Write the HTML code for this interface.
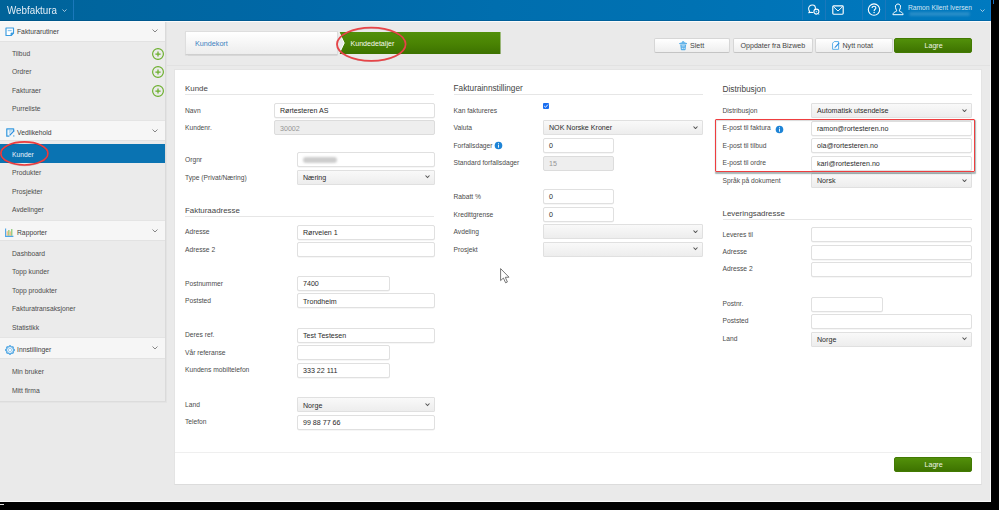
<!DOCTYPE html><html><head><meta charset="utf-8"><style>
html,body{margin:0;padding:0;width:999px;height:510px;overflow:hidden;background:#000;}
body{font-family:"Liberation Sans",sans-serif;position:relative;}
.ab{position:absolute;}
.t{position:absolute;white-space:pre;line-height:1;}
.inp{position:absolute;box-sizing:border-box;border:1px solid #e0e0e0;background:#fff;border-radius:2px;box-shadow:0 0.5px 0 #eee;}
.ro{position:absolute;box-sizing:border-box;border:1px solid #dcdcdc;background:#eeeeee;border-radius:2px;}
.sel{position:absolute;box-sizing:border-box;border:1px solid #e0e0e0;background:linear-gradient(#f9f9f9,#ededed);border-radius:1px;}
.btn{position:absolute;box-sizing:border-box;border:1px solid #d6d6d6;border-bottom-color:#c4c4c4;background:linear-gradient(#ffffff,#eeeeee);border-radius:2px;}
</style></head><body>
<div class="ab" style="left:0;top:0;width:991px;height:502px;background:#eaeaea;"></div>
<div class="ab" style="left:0;top:501px;width:991px;height:1px;background:#f8f8f8;"></div>
<div class="ab" style="left:990px;top:21px;width:1px;height:481px;background:#f8f8f8;"></div>
<div class="ab" style="left:0;top:504px;width:4px;height:1px;background:#e0e0e0;"></div>
<div class="ab" style="left:993px;top:0;width:1px;height:4px;background:#1a6fc0;"></div>

<div class="ab" style="left:0;top:0;width:991px;height:21px;background:linear-gradient(to right,#006399 0%,#00659e 10%,#0068a7 30%,#006eae 50%,#0072b3 70%,#0076bb 85%,#007ac0 100%);border-bottom:1px solid rgba(0,50,90,0.25);box-sizing:border-box;"></div>
<div class="ab" style="left:990px;top:0;width:1px;height:21px;background:#1479c9;"></div>
<div class="ab" style="left:0;top:21px;width:990px;height:1px;background:#fbfbfb;"></div>
<div class="t" style="left:7px;top:6.30px;font-size:9.8px;color:#e3eef7;transform:scaleY(1.13);transform-origin:0 8.3px;">Webfaktura</div>
<svg class="ab" style="left:61.5px;top:8.5px" width="5" height="3.5" viewBox="0 0 5 3.5"><path d="M0.5 0.5 L2.5 2.5 L4.5 0.5" fill="none" stroke="#cfe0ee" stroke-width="0.8"/></svg>
<div class="ab" style="left:73px;top:0;width:1px;height:20px;background:#1b78bb;"></div>
<div class="ab" style="left:802px;top:0;width:1px;height:20px;background:#1b78bb;"></div>
<div class="ab" style="left:825px;top:0;width:1px;height:20px;background:#1b78bb;"></div>
<div class="ab" style="left:862px;top:0;width:1px;height:20px;background:#1b78bb;"></div>
<div class="ab" style="left:885px;top:0;width:1px;height:20px;background:#1b78bb;"></div>
<svg class="ab" style="left:806px;top:4px" width="16" height="12" viewBox="0 0 16 12">
<path d="M9.2 5.6 C10 2.6 8.6 0.9 6.4 0.9 C4 0.9 2.5 2.6 2.6 4.8 C2.7 6.2 3.2 7 3.6 7.4 L2.8 8.7 L5.2 8.2 C5.6 8.4 6.2 8.5 7 8.4" fill="none" stroke="#fff" stroke-width="1.05" stroke-linecap="round" stroke-linejoin="round"/>
<circle cx="10.4" cy="7.6" r="2.5" fill="none" stroke="#fff" stroke-width="1.05"/>
<circle cx="10.4" cy="7.6" r="0.8" fill="#9fd0f0"/>
<path d="M12.2 9.6 L12.9 10.6" stroke="#fff" stroke-width="0.9"/>
</svg>
<svg class="ab" style="left:831.5px;top:5px" width="12" height="10" viewBox="0 0 12 10">
<rect x="0.8" y="0.8" width="10.4" height="8.4" rx="0.9" fill="none" stroke="#fff" stroke-width="1.15"/>
<path d="M1.4 1.6 L6 6 L10.6 1.6" fill="none" stroke="#fff" stroke-width="0.95"/>
</svg>
<svg class="ab" style="left:867px;top:3px" width="14" height="14" viewBox="0 0 14 14">
<circle cx="7" cy="6.6" r="5.7" fill="none" stroke="#fff" stroke-width="1.1"/>
<path d="M5.1 5.1 C5.1 3.8 6 3.2 7 3.2 C8.1 3.2 8.9 3.9 8.9 4.9 C8.9 6.2 7.1 6.3 7.1 7.9" fill="none" stroke="#fff" stroke-width="1.1"/><circle cx="7.1" cy="9.5" r="0.7" fill="#fff"/>
</svg>
<svg class="ab" style="left:892px;top:3px" width="12" height="13" viewBox="0 0 12 13">
<path d="M6 1 C4 1 3.3 2.6 3.5 4.3 C3.6 5.6 4.2 6.7 4.6 7.2 L4.4 8.3 C3 8.9 1 9.4 0.9 11.7 L11.1 11.7 C11 9.4 9 8.9 7.6 8.3 L7.4 7.2 C7.8 6.7 8.4 5.6 8.5 4.3 C8.7 2.6 8 1 6 1 Z" fill="none" stroke="#fff" stroke-width="1"/>
</svg>
<div class="t" style="left:908px;top:5.23px;font-size:6.7px;color:#d5e6f4;">Ramon Klient Iversen</div>
<div class="ab" style="left:909px;top:12.2px;width:61px;height:3.6px;background:rgba(255,255,255,0.15);filter:blur(1.2px);border-radius:2px;"></div>
<svg class="ab" style="left:979.5px;top:8.5px" width="5" height="3.5" viewBox="0 0 5 3.5"><path d="M0.5 0.5 L2.5 2.5 L4.5 0.5" fill="none" stroke="#cfe0ee" stroke-width="0.8"/></svg>
<div class="ab" style="left:0;top:22px;width:165px;height:379px;background:#ebebeb;"></div>
<div class="ab" style="left:165px;top:22px;width:1px;height:380px;background:#dadada;"></div>
<div class="ab" style="left:166px;top:22px;width:1px;height:380px;background:#e3e3e3;"></div>
<div class="ab" style="left:0;top:401px;width:166px;height:1px;background:#dcdcdc;"></div>
<div class="ab" style="left:0;top:402px;width:167px;height:1px;background:#e4e4e4;"></div>
<div class="ab" style="left:0;top:22px;width:165px;height:19.5px;background:#f6f6f6;border-bottom:1px solid #e2e2e2;box-sizing:border-box;"></div>
<div class="t" style="left:17px;top:29.39px;font-size:6.75px;color:#404040;">Fakturarutiner</div>
<svg class="ab" style="left:152px;top:28.8px" width="6" height="4" viewBox="0 0 6 4"><path d="M0.5 0.5 L3.0 3 L5.5 0.5" fill="none" stroke="#7a7a7a" stroke-width="0.9"/></svg>
<div class="ab" style="left:0;top:121px;width:165px;height:20px;background:#f6f6f6;border-bottom:1px solid #e2e2e2;box-sizing:border-box;"></div>
<div class="t" style="left:17px;top:130.19px;font-size:6.75px;color:#404040;">Vedlikehold</div>
<svg class="ab" style="left:152px;top:129px" width="6" height="4" viewBox="0 0 6 4"><path d="M0.5 0.5 L3.0 3 L5.5 0.5" fill="none" stroke="#7a7a7a" stroke-width="0.9"/></svg>
<div class="ab" style="left:0;top:221px;width:165px;height:20px;background:#f6f6f6;border-bottom:1px solid #e2e2e2;box-sizing:border-box;"></div>
<div class="t" style="left:17px;top:230.19px;font-size:6.75px;color:#404040;">Rapporter</div>
<svg class="ab" style="left:152px;top:229px" width="6" height="4" viewBox="0 0 6 4"><path d="M0.5 0.5 L3.0 3 L5.5 0.5" fill="none" stroke="#7a7a7a" stroke-width="0.9"/></svg>
<div class="ab" style="left:0;top:338px;width:165px;height:21px;background:#f6f6f6;border-bottom:1px solid #e2e2e2;box-sizing:border-box;"></div>
<div class="t" style="left:17px;top:347.19px;font-size:6.75px;color:#404040;">Innstillinger</div>
<svg class="ab" style="left:152px;top:346px" width="6" height="4" viewBox="0 0 6 4"><path d="M0.5 0.5 L3.0 3 L5.5 0.5" fill="none" stroke="#7a7a7a" stroke-width="0.9"/></svg>
<div class="ab" style="left:0;top:120px;width:165px;height:1px;background:#e4e4e4;"></div>
<div class="ab" style="left:0;top:220px;width:165px;height:1px;background:#e4e4e4;"></div>
<div class="ab" style="left:0;top:337px;width:165px;height:1px;background:#e4e4e4;"></div>
<svg class="ab" style="left:5.2px;top:27.4px" width="10" height="10" viewBox="0 0 10 10">
<path d="M1 1 H8.5 V6.2 L6.2 8.5 H1 Z" fill="#fff" stroke="#3b9ce0" stroke-width="1.15" stroke-linejoin="round"/>
<path d="M6 8.5 V6 H8.5 Z" fill="#3b9ce0" stroke="#3b9ce0" stroke-width="0.8" stroke-linejoin="round"/>
<rect x="2.7" y="2.9" width="4" height="1.3" fill="#8cc6ee"/>
</svg>
<svg class="ab" style="left:5.5px;top:127.6px" width="9" height="9" viewBox="0 0 9 9">
<path d="M2.4 1.8 H7.2 L2.4 6.8 Z" fill="#b5daf4"/>
<path d="M7.6 3.2 V0.8 H0.8 V8.2 H3.4" fill="none" stroke="#3b9ce0" stroke-width="1.3" stroke-linejoin="round"/>
<rect x="1.9" y="2.3" width="0.8" height="4.6" fill="#fff"/>
<path d="M3.6 7.4 L8.2 2.6" stroke="#2f8fe0" stroke-width="1.3"/>
<circle cx="7.8" cy="7.9" r="0.7" fill="#3b9ce0"/>
</svg>
<svg class="ab" style="left:5px;top:228px" width="9" height="9" viewBox="0 0 9 9">
<rect x="1.6" y="3.2" width="1.6" height="4.6" fill="#f6c38f"/>
<rect x="3.2" y="2" width="1.3" height="5.8" fill="#8fca79"/>
<rect x="4.5" y="3.4" width="1.6" height="4.4" fill="#f6c38f"/>
<rect x="6.1" y="1" width="1.3" height="6.8" fill="#8fca79"/>
<path d="M0.6 0.5 V8.4 H8.4" fill="none" stroke="#4ea6e6" stroke-width="1.1"/>
</svg>
<svg class="ab" style="left:4.8px;top:344.8px" width="10" height="10" viewBox="0 0 10 10">
<path d="M4.58 0.72 L5.42 0.72 L5.99 1.75 L6.60 2.00 L7.73 1.68 L8.32 2.27 L8.00 3.40 L8.25 4.01 L9.28 4.58 L9.28 5.42 L8.25 5.99 L8.00 6.60 L8.32 7.73 L7.73 8.32 L6.60 8.00 L5.99 8.25 L5.42 9.28 L4.58 9.28 L4.01 8.25 L3.40 8.00 L2.27 8.32 L1.68 7.73 L2.00 6.60 L1.75 5.99 L0.72 5.42 L0.72 4.58 L1.75 4.01 L2.00 3.40 L1.68 2.27 L2.27 1.68 L3.40 2.00 L4.01 1.75 Z" fill="#eaf4fc" stroke="#3b9ce0" stroke-width="1.1" stroke-linejoin="round"/>
<circle cx="5" cy="5" r="1.6" fill="#fff" stroke="#7dbdea" stroke-width="0.7"/>
</svg>
<div class="t" style="left:12px;top:50.99px;font-size:6.75px;color:#4b4b4b;">Tilbud</div>
<div class="t" style="left:12px;top:69.49px;font-size:6.75px;color:#4b4b4b;">Ordrer</div>
<div class="t" style="left:12px;top:87.99px;font-size:6.75px;color:#4b4b4b;">Fakturaer</div>
<div class="t" style="left:12px;top:106.49px;font-size:6.75px;color:#4b4b4b;">Purreliste</div>
<div class="t" style="left:12px;top:170.19px;font-size:6.75px;color:#4b4b4b;">Produkter</div>
<div class="t" style="left:12px;top:188.69px;font-size:6.75px;color:#4b4b4b;">Prosjekter</div>
<div class="t" style="left:12px;top:207.19px;font-size:6.75px;color:#4b4b4b;">Avdelinger</div>
<div class="t" style="left:12px;top:250.99px;font-size:6.75px;color:#4b4b4b;">Dashboard</div>
<div class="t" style="left:12px;top:269.49px;font-size:6.75px;color:#4b4b4b;">Topp kunder</div>
<div class="t" style="left:12px;top:287.99px;font-size:6.75px;color:#4b4b4b;">Topp produkter</div>
<div class="t" style="left:12px;top:306.49px;font-size:6.75px;color:#4b4b4b;">Fakturatransaksjoner</div>
<div class="t" style="left:12px;top:324.99px;font-size:6.75px;color:#4b4b4b;">Statistikk</div>
<div class="t" style="left:12px;top:369.49px;font-size:6.75px;color:#4b4b4b;">Min bruker</div>
<div class="t" style="left:12px;top:387.99px;font-size:6.75px;color:#4b4b4b;">Mitt firma</div>
<svg class="ab" style="left:150.5px;top:46.6px" width="14" height="14" viewBox="0 0 14 14"><circle cx="7" cy="7" r="5.4" fill="none" stroke="#6aae2b" stroke-width="1.15"/><path d="M7 4.4 V9.6 M4.4 7 H9.6" stroke="#6aae2b" stroke-width="1.25"/></svg>
<svg class="ab" style="left:150.5px;top:65px" width="14" height="14" viewBox="0 0 14 14"><circle cx="7" cy="7" r="5.4" fill="none" stroke="#6aae2b" stroke-width="1.15"/><path d="M7 4.4 V9.6 M4.4 7 H9.6" stroke="#6aae2b" stroke-width="1.25"/></svg>
<svg class="ab" style="left:150.5px;top:83.5px" width="14" height="14" viewBox="0 0 14 14"><circle cx="7" cy="7" r="5.4" fill="none" stroke="#6aae2b" stroke-width="1.15"/><path d="M7 4.4 V9.6 M4.4 7 H9.6" stroke="#6aae2b" stroke-width="1.25"/></svg>
<div class="ab" style="left:0;top:144px;width:165px;height:19px;background:#0a73b2;"></div>
<div class="t" style="left:12px;top:152.09px;font-size:6.75px;color:#e9f2fa;">Kunder</div>
<svg class="ab" style="left:0;top:140px" width="50" height="27" viewBox="0 0 50 27"><ellipse cx="24.4" cy="13.9" rx="23.5" ry="11.5" fill="none" stroke="rgba(0,0,0,0.18)" stroke-width="1.6"/><ellipse cx="24.4" cy="13.4" rx="23.5" ry="11.6" fill="none" stroke="#ee3b3d" stroke-width="1.7"/></svg>
<div class="ab" style="left:167px;top:65px;width:823px;height:1px;background:#e2e2e2;"></div>
<div class="ab" style="left:184.5px;top:31px;width:153.5px;height:24px;box-sizing:border-box;border:1px solid #dedede;border-bottom-color:#cfcfcf;background:linear-gradient(#ffffff,#ededed);box-shadow:0 0.5px 1px rgba(0,0,0,0.08);"></div>
<div class="t" style="left:195px;top:40.01px;font-size:7.2px;color:#3d7fbf;">Kundekort</div>
<svg class="ab" style="left:337px;top:32px" width="164" height="22" viewBox="0 0 164 22"><defs><linearGradient id="g1" x1="0" y1="0" x2="0" y2="1"><stop offset="0" stop-color="#52900a"/><stop offset="0.5" stop-color="#4a8403"/><stop offset="1" stop-color="#3d7200"/></linearGradient></defs><path d="M2 0 H163.5 V22 H2 L7.2 11 Z" fill="url(#g1)"/><path d="M2 0 L7.2 11 L2 22" fill="none" stroke="#ffffff" stroke-width="1"/></svg>
<div class="t" style="left:350.5px;top:41.09px;font-size:7.1px;color:#f7f9ee;">Kundedetaljer</div>
<svg class="ab" style="left:334px;top:25px" width="76" height="39" viewBox="0 0 76 39"><ellipse cx="37.3" cy="19.7" rx="34.3" ry="16.5" fill="none" stroke="rgba(0,0,0,0.15)" stroke-width="1.6"/><ellipse cx="37.3" cy="19.2" rx="34.3" ry="16.6" fill="none" stroke="#e84448" stroke-width="1.8"/></svg>
<div class="btn" style="left:654px;top:38px;width:76px;height:15px;"></div>
<div class="t" style="left:690px;top:42.69px;font-size:7.1px;color:#444;">Slett</div>
<div class="btn" style="left:733px;top:38px;width:80px;height:15px;"></div>
<div class="t" style="left:740.5px;top:42.69px;font-size:7.1px;color:#444;">Oppdater fra Bizweb</div>
<div class="btn" style="left:815px;top:38px;width:77.5px;height:15px;"></div>
<div class="t" style="left:842.5px;top:42.69px;font-size:7.1px;color:#444;">Nytt notat</div>
<svg class="ab" style="left:679px;top:40.5px" width="9" height="10" viewBox="0 0 9 10"><path d="M3 1.2 L4.2 0.4 L5.4 1.2" fill="none" stroke="#57aee8" stroke-width="1"/><path d="M0.4 2.6 L4.2 1.4 L8 2.6 Z" fill="#57aee8" stroke="#57aee8" stroke-width="0.9" stroke-linejoin="round"/><path d="M1.2 3.4 H7.2 L6.6 8.4 Q6.5 9.2 5.8 9.2 H2.6 Q1.9 9.2 1.8 8.4 Z" fill="#57aee8"/><rect x="2.6" y="4.4" width="3.2" height="1" fill="#c6e3f7"/><rect x="2.8" y="6.8" width="1" height="1" fill="#fff"/><rect x="4.6" y="6.8" width="1" height="1" fill="#fff"/></svg>
<svg class="ab" style="left:832px;top:40.8px" width="8" height="9" viewBox="0 0 8 9"><path d="M2.2 0.6 H6.6 V8.3 H0.6 V2.2 Z" fill="#fff" stroke="#5aafe8" stroke-width="1" stroke-linejoin="round"/><path d="M2.2 7.2 L3 5.6 L6.8 1.4 L7.6 2.2 L3.8 6.4 Z" fill="#2f8fe0"/><path d="M2.6 6.8 L3.4 6.2" stroke="#fff" stroke-width="0.6"/></svg>
<div class="ab" style="left:894px;top:38px;width:78px;height:14.5px;box-sizing:border-box;border:1px solid #427a02;border-radius:2px;background:linear-gradient(#52900a,#3e7300);"></div>
<div class="t" style="left:924.5px;top:42.69px;font-size:7.1px;color:#f0f4e8;">Lagre</div>
<div class="ab" style="left:174px;top:69px;width:808px;height:416px;box-sizing:border-box;border:1px solid #e4e4e4;border-bottom-color:#dcdcdc;background:#fff;"></div>
<div class="ab" style="left:175px;top:452px;width:806px;height:1px;background:#efefef;"></div>
<div class="ab" style="left:894px;top:457px;width:77.5px;height:14.5px;box-sizing:border-box;border:1px solid #427a02;border-radius:2px;background:linear-gradient(#52900a,#3e7300);"></div>
<div class="t" style="left:924.5px;top:462.19px;font-size:7.1px;color:#f0f4e8;">Lagre</div>
<div class="t" style="left:185px;top:85.01px;font-size:7.9px;color:#444;">Kunde</div>
<div class="ab" style="left:185px;top:94px;width:249px;height:1px;background:#e6e6e6;"></div>
<div class="t" style="left:185px;top:107.53px;font-size:6.7px;color:#4b4b4b;">Navn</div>
<div class="t" style="left:185px;top:125.03px;font-size:6.7px;color:#4b4b4b;">Kundenr.</div>
<div class="t" style="left:185px;top:157.03px;font-size:6.7px;color:#4b4b4b;">Orgnr</div>
<div class="t" style="left:185px;top:174.53px;font-size:6.7px;color:#4b4b4b;">Type (Privat/Næring)</div>
<div class="inp" style="left:274px;top:103px;width:161px;height:15px"></div>
<div class="t" style="left:280px;top:108.29px;font-size:7.1px;color:#2b2b2b;">Rørtesteren AS</div>
<div class="ro" style="left:274px;top:120px;width:161px;height:15px"></div>
<div class="t" style="left:280px;top:125.59px;font-size:7.1px;color:#959595;">30002</div>
<div class="inp" style="left:297px;top:152px;width:138px;height:15px"></div>
<div class="ab" style="left:303px;top:156.8px;width:34px;height:6px;background:#cdcdcd;filter:blur(1.3px);border-radius:3px;"></div>
<div class="sel" style="left:297px;top:170px;width:138px;height:15px"></div>
<div class="t" style="left:303px;top:174.69px;font-size:7.1px;color:#2b2b2b;">Næring</div>
<svg class="ab" style="left:425px;top:175.2px" width="5" height="3.6" viewBox="0 0 5 3.6"><path d="M0.5 0.5 L2.5 2.6 L4.5 0.5" fill="none" stroke="#555" stroke-width="1.05"/></svg>
<div class="t" style="left:185px;top:206.61px;font-size:7.9px;color:#444;">Fakturaadresse</div>
<div class="ab" style="left:185px;top:216px;width:249px;height:1px;background:#e6e6e6;"></div>
<div class="t" style="left:185px;top:229.03px;font-size:6.7px;color:#4b4b4b;">Adresse</div>
<div class="t" style="left:185px;top:246.53px;font-size:6.7px;color:#4b4b4b;">Adresse 2</div>
<div class="t" style="left:185px;top:280.73px;font-size:6.7px;color:#4b4b4b;">Postnummer</div>
<div class="t" style="left:185px;top:298.03px;font-size:6.7px;color:#4b4b4b;">Poststed</div>
<div class="t" style="left:185px;top:332.03px;font-size:6.7px;color:#4b4b4b;">Deres ref.</div>
<div class="t" style="left:185px;top:349.53px;font-size:6.7px;color:#4b4b4b;">Vår referanse</div>
<div class="t" style="left:185px;top:367.03px;font-size:6.7px;color:#4b4b4b;">Kundens mobiltelefon</div>
<div class="t" style="left:185px;top:401.53px;font-size:6.7px;color:#4b4b4b;">Land</div>
<div class="t" style="left:185px;top:419.03px;font-size:6.7px;color:#4b4b4b;">Telefon</div>
<div class="inp" style="left:297px;top:225px;width:138px;height:15px"></div>
<div class="t" style="left:303px;top:229.99px;font-size:7.1px;color:#2b2b2b;">Rørveien 1</div>
<div class="inp" style="left:297px;top:242px;width:138px;height:15px"></div>
<div class="inp" style="left:297px;top:276px;width:93px;height:15px"></div>
<div class="t" style="left:303px;top:280.89px;font-size:7.1px;color:#2b2b2b;">7400</div>
<div class="inp" style="left:297px;top:293px;width:138px;height:15px"></div>
<div class="t" style="left:303px;top:298.59px;font-size:7.1px;color:#2b2b2b;">Trondheim</div>
<div class="inp" style="left:297px;top:328px;width:138px;height:15px"></div>
<div class="t" style="left:303px;top:333.09px;font-size:7.1px;color:#2b2b2b;">Test Testesen</div>
<div class="inp" style="left:297px;top:345px;width:93px;height:15px"></div>
<div class="inp" style="left:297px;top:363px;width:93px;height:15px"></div>
<div class="t" style="left:303px;top:368.09px;font-size:7.1px;color:#2b2b2b;">333 22 111</div>
<div class="sel" style="left:297px;top:397px;width:138px;height:15px"></div>
<div class="t" style="left:303px;top:402.59px;font-size:7.1px;color:#2b2b2b;">Norge</div>
<svg class="ab" style="left:425px;top:403.09999999999997px" width="5" height="3.6" viewBox="0 0 5 3.6"><path d="M0.5 0.5 L2.5 2.6 L4.5 0.5" fill="none" stroke="#555" stroke-width="1.05"/></svg>
<div class="inp" style="left:297px;top:415px;width:138px;height:15px"></div>
<div class="t" style="left:303px;top:419.89px;font-size:7.1px;color:#2b2b2b;">99 88 77 66</div>
<div class="t" style="left:453.5px;top:84.92px;font-size:8.25px;color:#444;">Fakturainnstillinger</div>
<div class="ab" style="left:453.5px;top:94px;width:249px;height:1px;background:#e6e6e6;"></div>
<div class="t" style="left:453.5px;top:107.53px;font-size:6.7px;color:#4b4b4b;">Kan faktureres</div>
<div class="t" style="left:453.5px;top:125.03px;font-size:6.7px;color:#4b4b4b;">Valuta</div>
<div class="t" style="left:453.5px;top:142.53px;font-size:6.7px;color:#4b4b4b;">Forfallsdager</div>
<div class="t" style="left:453.5px;top:160.03px;font-size:6.7px;color:#4b4b4b;">Standard forfallsdager</div>
<div class="t" style="left:453.5px;top:194.03px;font-size:6.7px;color:#4b4b4b;">Rabatt %</div>
<div class="t" style="left:453.5px;top:211.53px;font-size:6.7px;color:#4b4b4b;">Kredittgrense</div>
<div class="t" style="left:453.5px;top:229.03px;font-size:6.7px;color:#4b4b4b;">Avdeling</div>
<div class="t" style="left:453.5px;top:246.53px;font-size:6.7px;color:#4b4b4b;">Prosjekt</div>
<div class="ab" style="left:543px;top:103px;width:6px;height:6px;background:#1a6ef0;border-radius:1px;"></div>
<svg class="ab" style="left:543px;top:103px" width="6" height="6" viewBox="0 0 6 6"><path d="M1.2 3 L2.5 4.3 L4.9 1.6" fill="none" stroke="#fff" stroke-width="0.9"/></svg>
<div class="sel" style="left:543px;top:120px;width:160px;height:15px"></div>
<div class="t" style="left:549px;top:125.19px;font-size:7.1px;color:#2b2b2b;">NOK Norske Kroner</div>
<svg class="ab" style="left:693px;top:125.7px" width="5" height="3.6" viewBox="0 0 5 3.6"><path d="M0.5 0.5 L2.5 2.6 L4.5 0.5" fill="none" stroke="#555" stroke-width="1.05"/></svg>
<div class="inp" style="left:543px;top:138px;width:71px;height:15px"></div>
<div class="t" style="left:549px;top:143.09px;font-size:7.1px;color:#2b2b2b;">0</div>
<div class="ro" style="left:543px;top:156px;width:71px;height:15px"></div>
<div class="t" style="left:549px;top:160.69px;font-size:7.1px;color:#959595;">15</div>
<svg class="ab" style="left:493.5px;top:141px" width="9" height="9" viewBox="0 0 9 9"><circle cx="4.5" cy="4.5" r="3.8" fill="#1e84d6"/><rect x="4.05" y="3.7" width="0.9" height="3" fill="#fff"/><rect x="4.05" y="2.2" width="0.9" height="0.9" fill="#fff"/></svg>
<div class="inp" style="left:543px;top:189px;width:71px;height:15px"></div>
<div class="t" style="left:549px;top:194.19px;font-size:7.1px;color:#2b2b2b;">0</div>
<div class="inp" style="left:543px;top:207px;width:71px;height:15px"></div>
<div class="t" style="left:549px;top:211.69px;font-size:7.1px;color:#2b2b2b;">0</div>
<div class="sel" style="left:543px;top:224px;width:160px;height:15px"></div>
<svg class="ab" style="left:693px;top:229.79999999999998px" width="5" height="3.6" viewBox="0 0 5 3.6"><path d="M0.5 0.5 L2.5 2.6 L4.5 0.5" fill="none" stroke="#555" stroke-width="1.05"/></svg>
<div class="sel" style="left:543px;top:242px;width:160px;height:15px"></div>
<svg class="ab" style="left:693px;top:247.39999999999998px" width="5" height="3.6" viewBox="0 0 5 3.6"><path d="M0.5 0.5 L2.5 2.6 L4.5 0.5" fill="none" stroke="#555" stroke-width="1.05"/></svg>
<svg class="ab" style="left:500px;top:267.5px" width="11" height="16" viewBox="0 0 11 16"><path d="M0.6 0.6 V12.6 L3.4 10 L5.6 14.8 L7.4 14 L5.3 9.3 L9 9.2 Z" fill="#fff" stroke="#555" stroke-width="0.8" stroke-linejoin="round"/></svg>
<div class="t" style="left:722.5px;top:84.87px;font-size:8.3px;color:#444;">Distribusjon</div>
<div class="ab" style="left:722.5px;top:94px;width:249px;height:1px;background:#e6e6e6;"></div>
<div class="t" style="left:722.5px;top:107.53px;font-size:6.7px;color:#4b4b4b;">Distribusjon</div>
<div class="t" style="left:722.5px;top:125.03px;font-size:6.7px;color:#4b4b4b;">E-post til faktura</div>
<div class="t" style="left:722.5px;top:142.53px;font-size:6.7px;color:#4b4b4b;">E-post til tilbud</div>
<div class="t" style="left:722.5px;top:160.03px;font-size:6.7px;color:#4b4b4b;">E-post til ordre</div>
<div class="t" style="left:722.5px;top:177.53px;font-size:6.7px;color:#4b4b4b;">Språk på dokument</div>
<div class="sel" style="left:811px;top:103px;width:161px;height:15px"></div>
<div class="t" style="left:817px;top:108.29px;font-size:7.1px;color:#2b2b2b;">Automatisk utsendelse</div>
<svg class="ab" style="left:962px;top:108.8px" width="5" height="3.6" viewBox="0 0 5 3.6"><path d="M0.5 0.5 L2.5 2.6 L4.5 0.5" fill="none" stroke="#555" stroke-width="1.05"/></svg>
<div class="inp" style="left:811px;top:121px;width:161px;height:15px"></div>
<div class="t" style="left:817px;top:125.99px;font-size:7.1px;color:#2b2b2b;">ramon@rortesteren.no</div>
<div class="inp" style="left:811px;top:138px;width:161px;height:15px"></div>
<div class="t" style="left:817px;top:143.29px;font-size:7.1px;color:#2b2b2b;">ola@rortesteren.no</div>
<div class="inp" style="left:811px;top:156px;width:161px;height:15px"></div>
<div class="t" style="left:817px;top:160.69px;font-size:7.1px;color:#2b2b2b;">kari@rortesteren.no</div>
<div class="sel" style="left:811px;top:173px;width:161px;height:15px"></div>
<div class="t" style="left:817px;top:178.29px;font-size:7.1px;color:#2b2b2b;">Norsk</div>
<svg class="ab" style="left:962px;top:178.79999999999998px" width="5" height="3.6" viewBox="0 0 5 3.6"><path d="M0.5 0.5 L2.5 2.6 L4.5 0.5" fill="none" stroke="#555" stroke-width="1.05"/></svg>
<svg class="ab" style="left:775px;top:124.5px" width="9" height="9" viewBox="0 0 9 9"><circle cx="4.5" cy="4.5" r="3.8" fill="#1e84d6"/><rect x="4.05" y="3.7" width="0.9" height="3" fill="#fff"/><rect x="4.05" y="2.2" width="0.9" height="0.9" fill="#fff"/></svg>
<div class="ab" style="left:715.4px;top:118.8px;width:259.6px;height:53.6px;box-sizing:border-box;border:1.8px solid #ef3d3f;border-radius:1px;box-shadow:0.3px 1.2px 1.2px rgba(0,40,40,0.35), inset 0.5px 1px 1px rgba(0,0,0,0.15);"></div>
<div class="t" style="left:722.5px;top:209.61px;font-size:7.9px;color:#444;">Leveringsadresse</div>
<div class="ab" style="left:722.5px;top:219px;width:249px;height:1px;background:#e6e6e6;"></div>
<div class="t" style="left:722.5px;top:231.83px;font-size:6.7px;color:#4b4b4b;">Leveres til</div>
<div class="t" style="left:722.5px;top:249.03px;font-size:6.7px;color:#4b4b4b;">Adresse</div>
<div class="t" style="left:722.5px;top:266.43px;font-size:6.7px;color:#4b4b4b;">Adresse 2</div>
<div class="t" style="left:722.5px;top:300.93px;font-size:6.7px;color:#4b4b4b;">Postnr.</div>
<div class="t" style="left:722.5px;top:318.43px;font-size:6.7px;color:#4b4b4b;">Poststed</div>
<div class="t" style="left:722.5px;top:335.93px;font-size:6.7px;color:#4b4b4b;">Land</div>
<div class="inp" style="left:811px;top:227px;width:161px;height:15px"></div>
<div class="inp" style="left:811px;top:245px;width:161px;height:15px"></div>
<div class="inp" style="left:811px;top:262px;width:161px;height:15px"></div>
<div class="inp" style="left:811px;top:297px;width:72px;height:15px"></div>
<div class="inp" style="left:811px;top:314px;width:161px;height:15px"></div>
<div class="sel" style="left:811px;top:332px;width:161px;height:15px"></div>
<div class="t" style="left:817px;top:336.89px;font-size:7.1px;color:#2b2b2b;">Norge</div>
<svg class="ab" style="left:962px;top:337.4px" width="5" height="3.6" viewBox="0 0 5 3.6"><path d="M0.5 0.5 L2.5 2.6 L4.5 0.5" fill="none" stroke="#555" stroke-width="1.05"/></svg>
</body></html>
